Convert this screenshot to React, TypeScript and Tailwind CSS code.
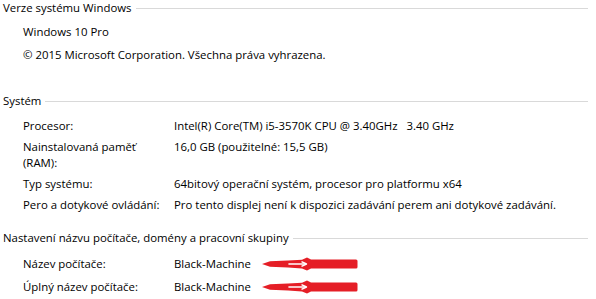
import React from "react";

function Arrow() {
  return (
    <svg width="96" height="16" viewBox="0 0 96 16" className="block shrink-0">
      <path
        d="M0 8 L8 5.2 L26 4.5 L40 3.8 L45 1.5 L49 3.6 L94 3.4 Q95.5 3.5 95.5 5 L95.5 11 Q95.5 12.6 94 12.6 L49 12.4 L45 14.5 L40 12.4 L26 11.6 L8 10.8 Z"
        fill="#e51e26"
      />
      <path d="M27 8 L43 8" stroke="#ffffff" strokeWidth="1.6" strokeLinecap="round" />
      <path d="M39.5 5.6 L44.5 8 L39.5 10.4" stroke="#ffffff" strokeWidth="1.4" fill="none" strokeLinejoin="round" />
    </svg>
  );
}

function Header({ text, className = "" }: { text: string; className?: string }) {
  return (
    <div className={`flex items-center pl-[3px] pr-[8px] h-[16px] ${className}`}>
      <span className="whitespace-nowrap">{text}</span>
      <div className="flex-1 h-px bg-[#d9d9d9] ml-[4px]" />
    </div>
  );
}

function Row({ label, value, className = "", arrow = false }: { label: React.ReactNode; value: string; className?: string; arrow?: boolean }) {
  return (
    <div className={`flex items-start ${className}`}>
      <div className="w-[174px] pl-[23px] shrink-0 whitespace-nowrap">{label}</div>
      <div className="flex items-center gap-[11px] whitespace-pre">
        <span>{value}</span>
        {arrow && <Arrow />}
      </div>
    </div>
  );
}

export default function App() {
  return (
    <div
      className="w-[596px] h-[299px] bg-white text-[11.4px] leading-[16px] text-[#000000] overflow-hidden"
      style={{ fontFamily: '"Open Sans", "Noto Sans", sans-serif' }}
    >
      <div className="flex flex-col">
        <Header text="Verze systému Windows" />
        <div className="pl-[23px] mt-[8px]">Windows 10 Pro</div>
        <div className="pl-[23px] mt-[7px]">© 2015 Microsoft Corporation. Všechna práva vyhrazena.</div>

        <Header text="Systém" className="mt-[30px]" />
        <Row className="mt-[9px]" label="Procesor:" value="Intel(R) Core(TM) i5-3570K CPU @ 3.40GHz   3.40 GHz" />
        <Row
          className="mt-[5px]"
          label={
            <>
              Nainstalovaná paměť
              <br />
              (RAM):
            </>
          }
          value="16,0 GB (použitelné: 15,5 GB)"
        />
        <Row className="mt-[5px]" label="Typ systému:" value="64bitový operační systém, procesor pro platformu x64" />
        <Row className="mt-[5px]" label="Pero a dotykové ovládání:" value="Pro tento displej není k dispozici zadávání perem ani dotykové zadávání." />

        <Header text="Nastavení názvu počítače, domény a pracovní skupiny" className="mt-[17px]" />
        <Row className="mt-[10px]" label="Název počítače:" value="Black-Machine" arrow />
        <Row className="mt-[7px]" label="Úplný název počítače:" value="Black-Machine" arrow />
      </div>
    </div>
  );
}
